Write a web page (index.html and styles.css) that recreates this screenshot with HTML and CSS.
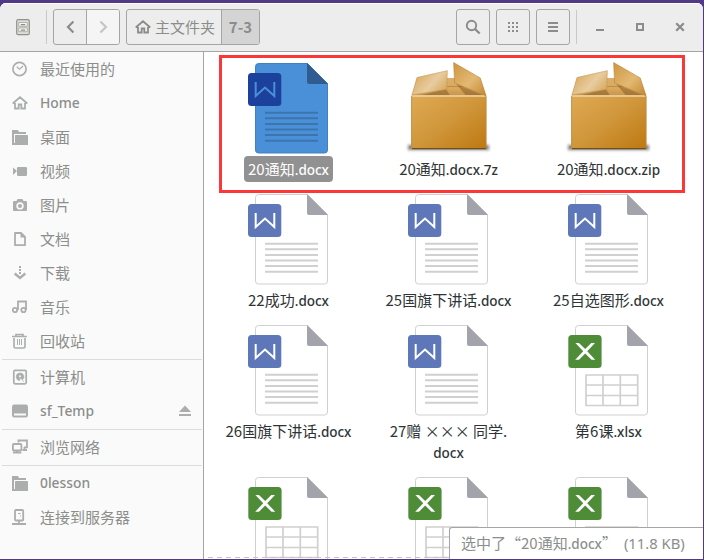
FILE: index.html
```html
<!DOCTYPE html>
<html lang="zh-CN">
<head>
<meta charset="utf-8">
<title>7-3</title>
<link rel="stylesheet" href="styles.css">
</head>
<body>
<svg class="defs" aria-hidden="true">
  <defs>
    <linearGradient id="front" x1="0" y1="0" x2="1" y2="1"><stop offset="0" stop-color="#dfaa55"/><stop offset=".5" stop-color="#d0963a"/><stop offset="1" stop-color="#bd7810"/></linearGradient>
    <linearGradient id="flapL" x1="0" y1="0" x2="1" y2=".6"><stop offset="0" stop-color="#d6a04e"/><stop offset=".65" stop-color="#e8cda0"/><stop offset="1" stop-color="#d9ae6a"/></linearGradient>
    <linearGradient id="flapR" x1="0" y1="0" x2="1" y2="1"><stop offset="0" stop-color="#cf9640"/><stop offset=".55" stop-color="#e2b973"/><stop offset="1" stop-color="#c4852e"/></linearGradient>
    <linearGradient id="inside" x1="0" y1="0" x2="0" y2="1"><stop offset="0" stop-color="#dcae67"/><stop offset=".6" stop-color="#d8a95f"/><stop offset="1" stop-color="#c8954a"/></linearGradient>
    <filter id="soft" x="-20%" y="-100%" width="140%" height="300%"><feGaussianBlur stdDeviation="1.6"/></filter>
    <symbol id="word" viewBox="0 0 96 96">
      <path class="page" d="M18.5 3.5H67.5L87.5 23.5V90a3 3 0 0 1-3 3H18.5a3 3 0 0 1-3-3V6.5a3 3 0 0 1 3-3Z"/>
      <path class="fold" d="M67 3L88 24H69a2 2 0 0 1-2-2Z"/>
      <path class="rules" d="M25 52.7H78M25 58.3H78M25 63.9H78M25 69.5H78M25 75.1H78M25 80.7H78"/>
      <rect class="badge" x="8" y="13" width="33.3" height="33" rx="3.5"/>
      <path class="glyph" d="M15.7 22V36L25 27.5L34.3 36V22"/>
    </symbol>
    <symbol id="sheet" viewBox="0 0 96 96">
      <path class="page" d="M18.5 3.5H67.5L87.5 23.5V90a3 3 0 0 1-3 3H18.5a3 3 0 0 1-3-3V6.5a3 3 0 0 1 3-3Z"/>
      <path class="fold" d="M67 3L88 24H69a2 2 0 0 1-2-2Z"/>
      <path class="cells" d="M26 53H77.7V83.5H26ZM26 63H78M26 73.5H78M43 53V84M60.3 53V84"/>
      <rect class="badge green" x="8.3" y="13" width="33.3" height="33" rx="3.5"/>
      <path class="cross" d="M15.4 21H19L25.2 27L31.3 21H35L27.2 29.2L35.2 37.7H31.5L25.2 31.4L19 37.7H15.2L23.2 29.2Z"/>
    </symbol>
    <symbol id="box" viewBox="0 0 96 96">
      <rect x="8" y="85" width="81" height="5" fill="#222" opacity=".6" filter="url(#soft)"/>
      <path d="M17 18L80 18L86 35.5H12Z" fill="url(#inside)"/>
      <path d="M47 26.5H63" stroke="#b8873f" stroke-width=".8"/>
      <path d="M20 35.5L46 29L50 35.500ZM56 24L84 35.500H66Z" fill="#7d5318" opacity=".45"/>
      <rect x="11.3" y="35" width="75" height="54" rx="1" fill="url(#front)"/>
      <path d="M12 36H86" stroke="#edd6ae" stroke-width="1.5"/>
      <path d="M11.6 36V88M86 36V88" stroke="#b98a42" stroke-width=".8"/>
      <path d="M12 88.7H86" stroke="#6d4e1d" stroke-width="1.2"/>
      <path d="M17 17.5L47.3 10.7L46.7 29.3L12 35Z" fill="url(#flapL)" stroke="#c79650" stroke-width=".6"/>
      <path d="M53.6 2.5L80.3 18L86 35.7L54.6 23Z" fill="url(#flapR)" stroke="#b98640" stroke-width=".6"/>
    </symbol>
    <symbol id="house" viewBox="0 0 16 16"><path d="M.7 8.5L8 2.2L15.3 8.5M3 8V13.5H6.7V9.5H9.3V13.5H13V8" fill="none" stroke="currentColor" stroke-width="1.8"/></symbol>
    <symbol id="folder" viewBox="0 0 16 16"><path d="M0 1H6L7 3H14V5H2V15H0Z" fill="currentColor"/><rect x="3" y="6" width="13" height="10" rx=".6" fill="currentColor"/><path d="M0 14H4V16H0Z" fill="currentColor"/></symbol>
  </defs>
</svg>
<div class="window">
  <header class="bar">
    <svg class="cabinet" viewBox="0 0 14 17"><rect x=".7" y=".7" width="12.6" height="15" rx="1.5" fill="#dededa" stroke="#8f928b" stroke-width="1.2"/><path d="M2.7 3.5H11.3V7.3H2.7ZM2.7 8.9H11.3V12.7H2.7Z" fill="#f6f6f4" stroke="#a9aca4" stroke-width=".9"/><path d="M4.8 5.7H9.2M4.8 11.1H9.2" stroke="#8a8d86" stroke-width="1.2"/></svg>
    <i class="vline first"></i>
    <div class="group nav">
      <span class="half"><svg viewBox="0 0 16 16" width="16" height="16"><path d="M11.4 2.5L6 8L11.4 13.5" fill="none" stroke="#8b8d8a" stroke-width="2.2"/></svg></span>
      <span class="half off"><svg viewBox="0 0 16 16" width="16" height="16"><path d="M5.4 2.5L11 8L5.4 13.5" fill="none" stroke="#c5c6c4" stroke-width="2.2"/></svg></span>
    </div>
    <div class="group path">
      <span class="crumb"><svg width="16" height="16"><use href="#house"/></svg>主文件夹</span>
      <span class="crumb current">7-3</span>
    </div>
    <div class="tools">
      <span class="tool"><svg viewBox="0 0 16 16" width="16" height="16" fill="none" stroke="currentColor"><circle cx="6.5" cy="6.5" r="4.7" stroke-width="1.9"/><path d="M9.8 9.8L14.7 14.5" stroke-width="2.3"/></svg></span>
      <span class="tool"><svg viewBox="0 0 16 16" width="16" height="16" stroke="currentColor" stroke-width="2" stroke-dasharray="2 2"><path d="M3 4H13M3 8H13M3 12H13"/></svg></span>
      <span class="tool"><svg viewBox="0 0 16 16" width="16" height="16" stroke="currentColor" stroke-width="2"><path d="M3 4H13M3 8H13M3 12H13"/></svg></span>
    </div>
    <i class="vline"></i>
    <div class="controls">
      <svg viewBox="0 0 16 16"><path d="M4 11H12" stroke-width="2"/></svg>
      <svg viewBox="0 0 16 16"><path d="M5 5H11V11H5Z" stroke-width="2"/></svg>
      <svg viewBox="0 0 16 16"><path d="M4.2 4.2L11.8 11.8M11.8 4.2L4.2 11.8" stroke-width="2.2"/></svg>
    </div>
  </header>
  <div class="main">
    <nav class="side">
      <div class="row"><svg viewBox="0 0 16 16"><circle cx="7.5" cy="8" r="6.6" fill="none" stroke="currentColor" stroke-width="1.7"/><path d="M4.7 5.7L7.5 8.3L11 5" fill="none" stroke="currentColor" stroke-width="1.2"/></svg><span>最近使用的</span></div>
      <div class="row latin"><svg><use href="#house"/></svg><span>Home</span></div>
      <div class="row"><svg><use href="#folder"/></svg><span>桌面</span></div>
      <div class="row"><svg viewBox="0 0 16 16" fill="currentColor"><path d="M1 4.5L5 8L1 12Z"/><rect x="5" y="4" width="10" height="9" rx="1.2"/></svg><span>视频</span></div>
      <div class="row"><svg viewBox="0 0 16 16" fill="currentColor" fill-rule="evenodd"><path d="M2 4H4.5L5.5 2H10.5L11.5 4H14a1 1 0 0 1 1 1V13a1 1 0 0 1-1 1H2a1 1 0 0 1-1-1V5a1 1 0 0 1 1-1ZM8 5.2A3.7 3.7 0 1 0 8 12.6A3.7 3.7 0 1 0 8 5.2Z"/><circle cx="8" cy="8.9" r="2"/></svg><span>图片</span></div>
      <div class="row"><svg viewBox="0 0 16 16"><path d="M3 2H9L13 6V14.2H3Z" fill="none" stroke="currentColor" stroke-width="1.8" stroke-linejoin="round"/><path d="M8.5 1.5V6.5H13.5Z" fill="currentColor"/></svg><span>文档</span></div>
      <div class="row"><svg viewBox="0 0 16 16" fill="none" stroke="currentColor" stroke-width="2"><path d="M8 1V9" stroke-dasharray="2 1"/><path d="M2.7 8.5L8 13L13.3 8.5" stroke-width="2.4"/></svg><span>下载</span></div>
      <div class="row"><svg viewBox="0 0 16 16" fill="none" stroke="currentColor" stroke-width="1.8"><circle cx="3" cy="11" r="2.2"/><circle cx="11.5" cy="11" r="2.2"/><path d="M6 11V2.5H14V11"/></svg><span>音乐</span></div>
      <div class="row"><svg viewBox="0 0 16 16" fill="none" stroke="currentColor"><path d="M0 3.5H15M4 3V1.5H11V3M2 5V13.5Q2 15 3.5 15H11.5Q13 15 13 13.5V5" stroke-width="1.7"/><path d="M5.5 6V12M7.5 6V12M9.5 6V12" stroke-width="1"/></svg><span>回收站</span></div>
      <hr>
      <div class="row"><svg viewBox="0 0 16 16"><rect x="1.8" y="1.3" width="12.4" height="13.6" rx="1.3" fill="none" stroke="currentColor" stroke-width="1.7"/><path d="M8 4A3.7 3.7 0 1 0 8 11.4L7.2 8.5L10.5 10.6A3.7 3.7 0 0 0 8 4ZM9.8 10.5L12 12.7" fill="currentColor" stroke="currentColor" stroke-width=".8"/><circle cx="8" cy="7.3" r="1" fill="#fafafa"/></svg><span>计算机</span></div>
      <div class="row latin"><svg viewBox="0 0 16 16"><rect y="1.5" width="16" height="13" rx="2.2" fill="currentColor"/><path d="M2 10.5H14V12.5H2Z" fill="#fafafa"/></svg><span>sf_Temp</span><svg class="eject" viewBox="0 0 12 12" fill="currentColor"><path d="M0 7L6 .5L12 7ZM0 9H12V11H0Z"/></svg></div>
      <hr>
      <div class="row"><svg viewBox="0 0 16 16" fill="none" stroke="currentColor" stroke-width="1.8"><path d="M6.5 3.5V1.5H15V8.3H12"/><rect x=".9" y="5" width="8.5" height="6.5" rx="1"/><path d="M5 11V13.5M1 13.5H9.3M12.5 8V11M10.5 11H15"/></svg><span>浏览网络</span></div>
      <hr>
      <div class="row latin"><svg><use href="#folder"/></svg><span>0lesson</span></div>
      <div class="row"><svg viewBox="0 0 16 16" fill="none" stroke="currentColor" stroke-width="1.8"><rect x="3" y="1" width="8.2" height="10.5" rx="1"/><path d="M7 11V15M0 15H14"/><path d="M6 4.5H8.7M8 7H9" stroke-width="1"/></svg><span>连接到服务器</span></div>
    </nav>
    <section class="files">
      <div class="file selected"><svg><use href="#word"/></svg><p>20通知<b>.docx</b></p></div>
      <div class="file"><svg><use href="#box"/></svg><p>20通知<b>.docx.7z</b></p></div>
      <div class="file"><svg><use href="#box"/></svg><p>20通知<b>.docx.zip</b></p></div>
      <div class="file"><svg><use href="#word"/></svg><p>22成功<b>.docx</b></p></div>
      <div class="file"><svg><use href="#word"/></svg><p>25国旗下讲话<b>.docx</b></p></div>
      <div class="file"><svg><use href="#word"/></svg><p>25自选图形<b>.docx</b></p></div>
      <div class="file"><svg><use href="#word"/></svg><p>26国旗下讲话<b>.docx</b></p></div>
      <div class="file"><svg><use href="#word"/></svg><p>27赠 ××× 同学.<br><b>docx</b></p></div>
      <div class="file"><svg><use href="#sheet"/></svg><p>第6课<b>.xlsx</b></p></div>
      <div class="file"><svg><use href="#sheet"/></svg></div>
      <div class="file"><svg><use href="#sheet"/></svg></div>
      <div class="file"><svg><use href="#sheet"/></svg></div>
    </section>
  </div>
  <div class="more"></div>
  <div class="status">选中了“20通知<b>.docx</b>”<span class="size">(11.8 KB)</span></div>
  <div class="mark"></div>
</div>
</body>
</html>
```
FILE: styles.css
```css
* { box-sizing: border-box; }
body {
  margin: 0;
  width: 704px;
  height: 560px;
  overflow: hidden;
  background: #503a86;
  padding: 3px 1px 1px 0;
  font: 15px/21px "Noto Sans CJK SC", sans-serif;
  color: #2e3436;
}
b { font: 500 13.5px/1 "Noto Sans", sans-serif; }
.defs { position: absolute; width: 0; height: 0; }
.window {
  height: 556px;
  overflow: hidden;
  background: #fff;
  border-radius: 6px 6px 0 0;
}
.bar {
  display: flex;
  align-items: center;
  height: 49px;
  padding: 0 15px 1px 16px;
  background: #ededed;
  border-top: 1px solid #fff;
  border-bottom: 1px solid #a5a5a5;
  color: #8b8d8a;
}
.cabinet { width: 14px; height: 17px; }
.vline { width: 1px; height: 34px; background: #c9c9c9; }
.vline.first { margin: 0 6px 0 16px; }
.group {
  display: flex;
  height: 36px;
  border: 1px solid #a5a5a5;
  border-radius: 3px;
  overflow: hidden;
}
.nav { width: 67px; margin-right: 6px; }
.half { flex: 1; display: grid; place-items: center; }
.half.off { background: #f5f5f5; border-left: 1px solid #a5a5a5; }
.path { width: 134px; }
.crumb {
  display: flex;
  align-items: center;
  gap: 4px;
  width: 94px;
  padding: 0 0 1px 8px;
  white-space: nowrap;
}
.crumb.current {
  width: 38px;
  padding: 0 0 2px;
  justify-content: center;
  border-left: 1px solid #a5a5a5;
  background: #d4d4d4;
  font-weight: 700;
}
.tools { display: flex; gap: 6px; margin: 0 6px 0 auto; }
.tool {
  display: grid;
  place-items: center;
  width: 34px;
  height: 36px;
  border: 1px solid #a5a5a5;
  border-radius: 3px;
}
.controls { display: flex; gap: 24px; margin-left: 15px; }
.controls svg { width: 16px; height: 16px; fill: none; stroke: currentColor; }
.main { display: flex; height: 507px; }
.side {
  width: 204px;
  flex: none;
  background: #fafafa;
  border-right: 1px solid #a5a5a5;
  color: #8b8e8b;
}
.row { display: flex; align-items: center; height: 34px; padding: 0 12px; gap: 12px; }
.row span { padding-bottom: 2px; }
.row.latin { font: 500 13.8px "Noto Sans", sans-serif; }
.row svg { width: 16px; height: 16px; color: #acaead; flex: none; }
.row .eject { width: 12px; height: 12px; margin-left: auto; }
.side hr { height: 1px; margin: 1px 1px 0 2px; border: 0; background: #dcdcdc; }
.files {
  display: grid;
  grid-template-columns: repeat(3, 160px);
  align-content: start;
  row-gap: 9px;
  padding: 8px 0 0 4px;
  overflow: hidden;
}
.file { display: flex; flex-direction: column; align-items: center; }
.file svg { width: 96px; height: 96px; flex: none; }
.file p {
  margin: 0 0 0 1px;
  padding: 2px 4px 3px;
  border-radius: 4px;
  text-align: center;
  white-space: nowrap;
}
.page { fill: var(--page, #fff); stroke: var(--edge, #d0d0d0); }
.fold { fill: var(--fold, #a3a3ac); }
.rules { stroke: var(--rule, #d0d0d0); stroke-width: 2; }
.cells { fill: none; stroke: #d0d0d0; stroke-width: 1.7; }
.badge { fill: var(--badge, #5d77b8); }
.badge.green { fill: #4f8c38; }
.glyph { fill: none; stroke: var(--glyph, #fff); stroke-width: 2; }
.cross { fill: #fff; }
.selected p { background: #919191; color: #fff; }
.selected svg {
  --glyph: #4a90d9;
  --page: #4a90d9;
  --edge: #4280c0;
  --fold: #305d91;
  --rule: #3c74ae;
  --badge: #1b419d;
}
.more {
  position: absolute;
  left: 208px;
  top: 557px;
  width: 241px;
  height: 1px;
  background: repeating-linear-gradient(90deg, #c4c4c4 0 5px, transparent 5px 9px);
}
.status {
  position: absolute;
  left: 449px;
  top: 527px;
  width: 254px;
  height: 32px;
  padding: 4px 0 0 11px;
  border: solid #a5a5a5;
  border-width: 1px 0 0 1px;
  border-top-left-radius: 3px;
  background: #fff;
  color: #8b8e8b;
  white-space: nowrap;
}
.size { margin-left: 7px; font: 14.8px/1 "Noto Sans", sans-serif; }
.mark {
  position: absolute;
  left: 219px;
  top: 55px;
  width: 466px;
  height: 138px;
  border: 3px solid #fc3737;
}
```
